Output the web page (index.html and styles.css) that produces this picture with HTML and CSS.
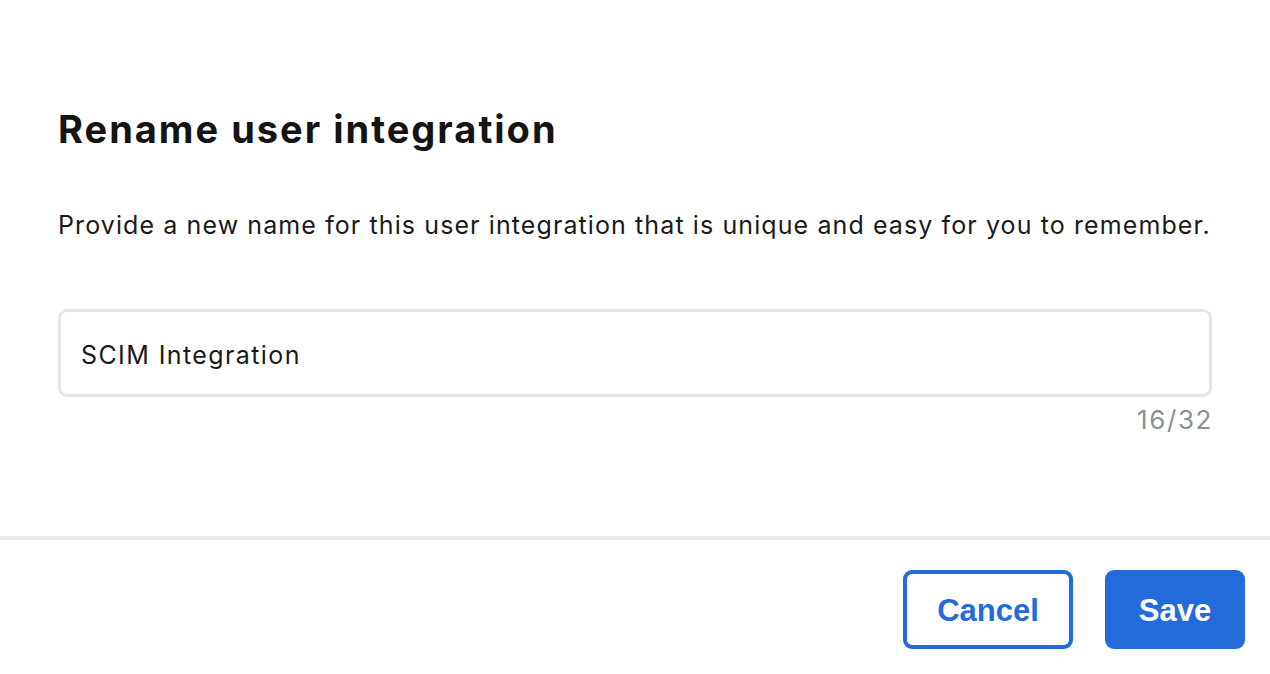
FILE: index.html
```html
<!DOCTYPE html>
<html>
<head>
<meta charset="utf-8">
<link rel="stylesheet" href="styles.css">
</head>
<body>
<div class="dialog">
  <div class="content">
    <h1 class="title">Rename user integration</h1>
    <p class="desc">Provide a new name for this user integration that is unique and easy for you to remember.</p>
    <div class="field">
      <div class="input">SCIM Integration</div>
      <div class="counter">16/32</div>
    </div>
  </div>
  <div class="divider"></div>
  <div class="footer">
    <button class="btn btn-outline">Cancel</button>
    <button class="btn btn-primary">Save</button>
  </div>
</div>
</body>
</html>
```
FILE: styles.css
```css
html, body {
  margin: 0;
  padding: 0;
  background: #ffffff;
}
body {
  font-family: Inter, "Noto Sans", sans-serif;
  color: #161616;
}
.dialog {
  width: 1270px;
  height: 674px;
  display: flex;
  flex-direction: column;
}
.content {
  padding: 105px 58px 0 58px;
}
.title {
  margin: 0;
  font-size: 38px;
  line-height: 48px;
  font-weight: 700;
  letter-spacing: 2px;
  color: #141414;
}
.desc {
  margin: 54px 0 0 0;
  font-size: 25px;
  line-height: 36px;
  letter-spacing: 1.1px;
  white-space: nowrap;
  color: #1a1a1a;
}
.field {
  margin-top: 66px;
}
.input {
  box-sizing: border-box;
  height: 88px;
  border: 3px solid #e4e6ec;
  border-radius: 9px;
  padding: 3px 0 0 20px;
  display: flex;
  align-items: center;
  font-size: 25px;
  letter-spacing: 1.4px;
  color: #1a1a1a;
}
.counter {
  margin-top: 7px;
  text-align: right;
  font-size: 26px;
  line-height: 32px;
  letter-spacing: 1.6px;
  margin-right: -1px;
  color: #8a9197;
}
.divider {
  margin-top: 100px;
  height: 4px;
  background: #e8e9ee;
}
.footer {
  display: flex;
  justify-content: flex-end;
  gap: 32px;
  padding: 30px 25px 0 0;
}
.btn {
  box-sizing: border-box;
  height: 79px;
  border-radius: 9px;
  font-family: "Liberation Sans", Arial, sans-serif;
  font-weight: 700;
  font-size: 31px;
  padding: 2px 0 0 0;
  cursor: pointer;
}
.btn-outline {
  width: 170px;
  background: #ffffff;
  color: #236bd9;
  border: 4px solid #236bd9;
}
.btn-primary {
  width: 140px;
  background: #236bd9;
  color: #ffffff;
  border: none;
}
```
